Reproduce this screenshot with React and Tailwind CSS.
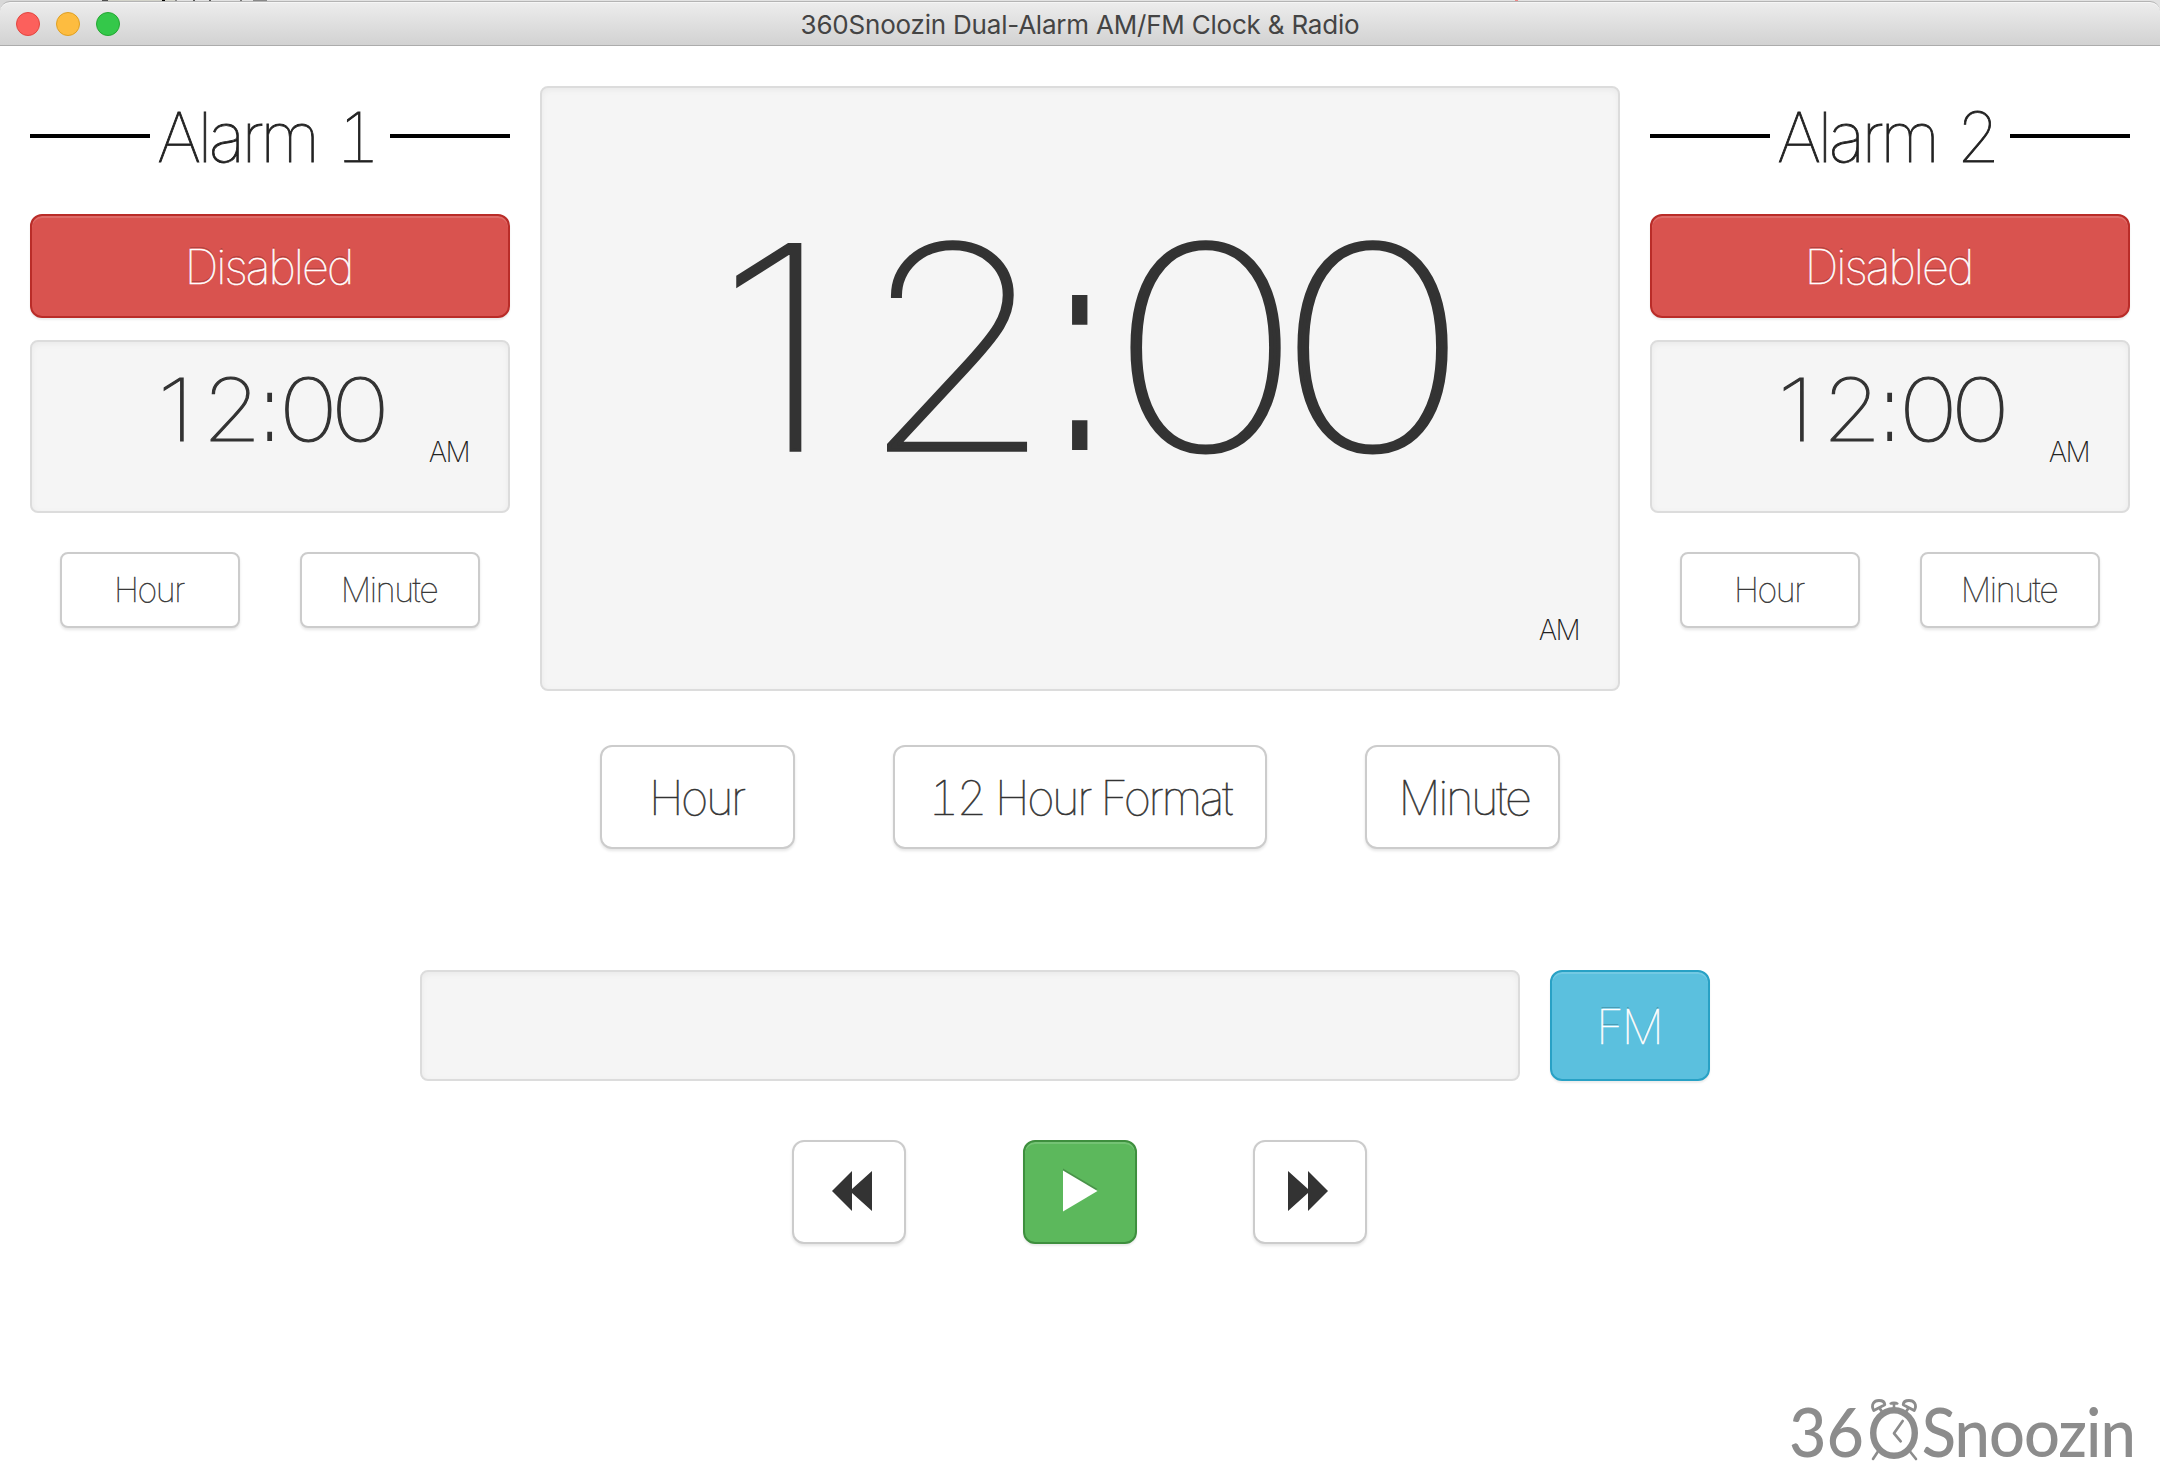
const box = "rounded-lg border-2 border-[#dcdcdc] bg-[#f5f5f5] shadow-[inset_0_2px_6px_rgba(0,0,0,0.05)]";
const thin = "font-thin tabular-nums [-webkit-text-stroke-width:0.012em]";
const plain = "flex items-center justify-center border-2 border-[#ccc] bg-white text-[#333] shadow-[0_2px_3px_rgba(0,0,0,0.1)] " + thin;
const large = "h-[104px] rounded-xl pt-0.5 text-[47px] tracking-[-0.05em] " + plain;
const small = "h-[76px] w-[180px] rounded-lg pr-0.5 pb-px text-[34px] tracking-[-0.042em] " + plain;
const solid = "flex items-center justify-center rounded-xl border-2 text-[47px] tracking-[-0.042em] text-white shadow-[inset_0_2px_0_rgba(255,255,255,0.15),0_2px_2px_rgba(0,0,0,0.075)] " + thin;

function Time({ className }) {
  return (
    <div className={"flex items-baseline justify-center font-thin text-[#333] [-webkit-text-stroke-width:0.013em] " + className}>
      <span className="flex w-[0.593em] justify-center pr-[0.08em]"><span className="scale-x-[1.18]">1</span></span>
      <span className="flex w-[0.593em] justify-center pl-[0.015em]"><span className="scale-x-[1.1]">2</span></span>
      <span className="flex w-[0.3em] justify-center">
        <span className="scale-x-[0.55] font-['Liberation_Sans'] text-[1.04em] leading-none [-webkit-text-stroke-width:0]">:</span>
      </span>
      <span className="flex w-[0.593em] justify-center pr-[0.118em]"><span className="scale-x-[1.16] tracking-[-0.1em]">0</span></span>
      <span className="flex w-[0.593em] justify-center pr-[0.118em]"><span className="scale-x-[1.16] tracking-[-0.1em]">0</span></span>
    </div>
  );
}

function Alarm({ name }) {
  return (
    <section className="flex flex-col px-[30px] pt-[53px]">
      <div className="flex h-[74px] items-center">
        <div className="h-1 w-[120px] bg-black" />
        <h2 className={"w-[240px] pt-0.5 pl-[7px] text-[69px] leading-[72px] tracking-[-0.052em] whitespace-nowrap text-[#222] [word-spacing:0.07em] " + thin}>{name}</h2>
        <div className="h-1 w-[120px] bg-black" />
      </div>
      <button className={"mt-[41px] h-[104px] border-[#b92c28] bg-[#d9534f] pt-[3px] pr-[3px] [text-shadow:0_-2px_0_rgba(0,0,0,0.2)] " + solid}>
        Disabled
      </button>
      <div className={"relative mt-[22px] h-[173px] " + box}>
        <Time className="pt-[18px] text-[87px] leading-[100px]" />
        <span className="absolute top-[94px] right-[39px] text-[28px] leading-8 font-[230] tracking-[-0.06em] text-[#222]">AM</span>
      </div>
      <div className="mt-[39px] flex gap-[60px] px-[30px]">
        <button className={small}>Hour</button>
        <button className={small}>Minute</button>
      </div>
    </section>
  );
}

function AlarmClock() {
  return (
    <svg className="mb-[3px] h-[68px] w-[60px]" viewBox="0 0 60 68" fill="none" stroke="#8c8c8c" strokeLinecap="round" strokeLinejoin="round">
      <ellipse cx="30" cy="37" rx="20.8" ry="22.8" strokeWidth="6.4" />
      <path d="M38.7 25L30 37.3l6.7 8" strokeWidth="2.7" />
      <path d="M13.6 56L9 63M46.4 56L52 63" strokeWidth="2.6" />
      <path d="M9.8 14.6C6.5 8.5 10 4.5 15 4.5c3.4 0 5.6 1.5 5.8 4.2zM15.5 12l2 3" strokeWidth="2.8" />
      <path d="M50.2 14.6C53.5 8.5 50 4.5 45 4.5c-3.4 0-5.6 1.5-5.8 4.2zM44.5 12l-2 3" strokeWidth="2.8" />
      <path d="M30 8v5" strokeWidth="2.6" />
      <path d="M26.5 7.6c1.5-1.3 5.5-1.3 7 0z" strokeWidth="2.2" fill="#8c8c8c" />
    </svg>
  );
}

export default function App() {
  return (
    <div className="flex h-[1484px] w-[2160px] flex-col overflow-hidden bg-white font-[Inter,sans-serif]">
      <div className="h-[46px] bg-[linear-gradient(to_right,#d8d8d8_0_102px,#505050_102px_108px,#d4d4ca_108px_162px,#000_162px_165px,#d4d4ca_165px_175px,#888_175px_177px,#e2e2e2_177px_193px,#555_193px_195px,#e2e2e2_195px_209px,#555_209px_211px,#e2e2e2_211px_240px,#777_240px_242px,#e2e2e2_242px_253px,#888_253px_267px,#e2e2e2_267px_1515px,#e88_1515px_1518px,#e2e2e2_1518px)]">
        <header className="relative mt-px flex h-[45px] items-center justify-center rounded-t-[10px] border-t border-b border-t-[#b4b4b4] border-b-[#acacac] bg-linear-to-b from-[#ededed] to-[#d2d2d2] shadow-[inset_0_1px_0_#f6f6f6]">
          <div className="absolute top-2.5 left-4 flex gap-4">
            <span className="size-6 rounded-full border border-[#e2463f] bg-[#fc605c]" />
            <span className="size-6 rounded-full border border-[#dfa023] bg-[#fdbc40]" />
            <span className="size-6 rounded-full border border-[#24a732] bg-[#34c84a]" />
          </div>
          <h1 className="pt-[3px] text-[26px] leading-8 tracking-[-0.008em] text-[#444]">360Snoozin Dual-Alarm AM/FM Clock &amp; Radio</h1>
        </header>
      </div>
      <main className="grid grid-cols-[540px_1080px_540px]">
        <Alarm name="Alarm 1" />
        <section className="pt-10">
          <div className={"relative h-[605px] " + box}>
            <Time className="pt-[110px] text-[282px] leading-[300px]" />
            <span className="absolute right-[39px] bottom-[43px] text-[28px] leading-8 font-[230] tracking-[-0.06em] text-[#222]">AM</span>
          </div>
          <div className="mt-[54px] flex justify-between px-[60px]">
            <button className={"w-[195px] pr-0.5 " + large}>Hour</button>
            <button className={"w-[374px] " + large}>12 Hour Format</button>
            <button className={"w-[195px] pl-[3px] " + large}>Minute</button>
          </div>
        </section>
        <Alarm name="Alarm 2" />
      </main>
      <section className="mt-[121px] flex gap-[30px] pl-[420px]">
        <div className={"h-[111px] w-[1100px] " + box} />
        <button className={"h-[111px] w-[160px] border-[#28a1c5] bg-[#5bc0de] pt-1 pr-0.5 [text-shadow:0_-2px_0_rgba(0,0,0,0.2)] " + solid}>
          FM
        </button>
      </section>
      <section className="mt-[59px] flex justify-center gap-[116.5px] pr-px">
        <button className={"w-[114px] " + large}>
          <svg className="mb-1 ml-1.5 size-[42px]" viewBox="0 0 42 42" fill="#333"><path d="M21 1v18L41 1v40L21 23v18L1 21z" /></svg>
        </button>
        <button className={"h-[104px] w-[114px] border-[#3e8f3e] bg-[#5cb85c] pb-0.5 pl-px " + solid}>
          <svg className="size-[42px] drop-shadow-[0_-2px_0_rgba(0,0,0,0.2)]" viewBox="0 0 42 42" fill="#fff"><path d="M4 0.5l34.5 20.5L4 41.5z" /></svg>
        </button>
        <button className={"w-[114px] " + large}>
          <svg className="mr-1 mb-1 size-[42px]" viewBox="0 0 42 42" fill="#333"><path d="M21 1v18L1 1v40l20-18v18l20-20z" /></svg>
        </button>
      </section>
      <footer className="mt-auto flex items-end justify-end pr-[25px] pb-[17px] font-[Lato,sans-serif] text-[68px] leading-[72px] font-medium text-[#8c8c8c]">
        <span className="flex w-[76px] origin-right scale-x-[0.95] justify-end">36</span>
        <AlarmClock />
        <span className="flex w-[211px] origin-right scale-x-[0.93] justify-end tracking-[-0.015em]">Snoozin</span>
      </footer>
    </div>
  );
}
